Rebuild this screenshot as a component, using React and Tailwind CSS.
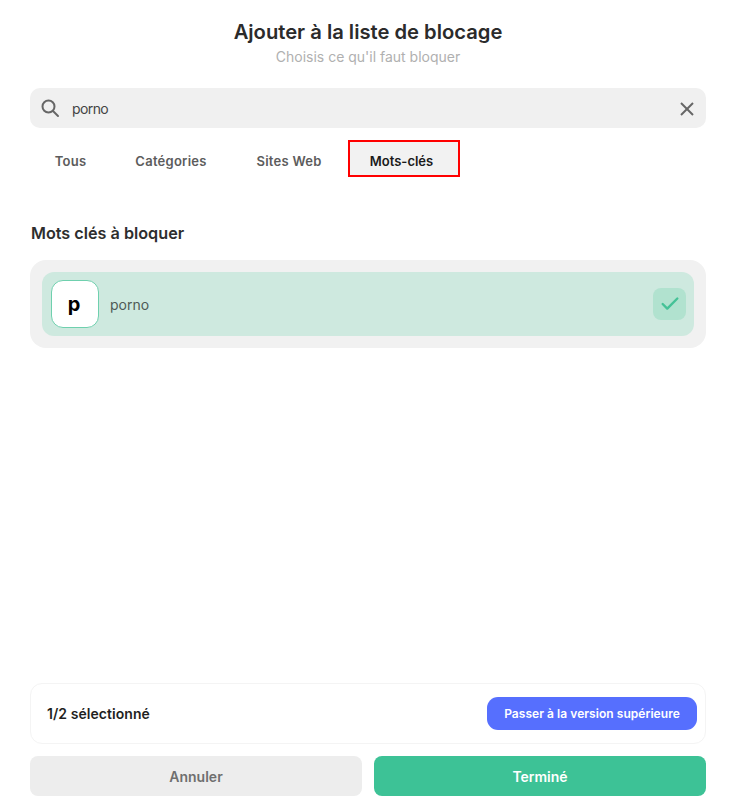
import React from 'react';
import { Check } from 'lucide-react';

const font = "font-['Inter',sans-serif]";

const tabs = [
    { label: 'Tous', className: 'w-[81px]' },
    { label: 'Catégories', className: 'w-[120px]' },
    { label: 'Sites Web', className: 'w-[116px]' },
];

const App = () => {
    return (
        <div className={`${font} h-[801px] w-[739px] bg-white flex flex-col pl-[30px] pr-[33px] overflow-hidden`}>
            <div className="pt-[20px] text-center">
                <h1 className="text-[20.2px] leading-[24px] font-semibold text-[#2b2b2b]">Ajouter à la liste de blocage</h1>
                <p className="mt-[2px] text-[14px] leading-[22px] text-[#b0b0b0]">Choisis ce qu'il faut bloquer</p>
            </div>

            <div className="mt-[20px] h-[40px] rounded-[10px] bg-[#f0f0f0] flex items-center pl-[10px] pr-[11px]">
                <svg width="20" height="20" viewBox="0 0 20 20" fill="none" stroke="#666666" strokeWidth="2" strokeLinecap="round">
                    <circle cx="8.5" cy="8.5" r="6" />
                    <line x1="13" y1="13" x2="18" y2="18" />
                </svg>
                <span className="ml-[12px] text-[14px] tracking-[-0.6px] text-[#444444]">porno</span>
                <svg width="16" height="16" viewBox="0 0 16 16" fill="none" stroke="#666666" strokeWidth="2" className="ml-auto mt-[2px]">
                    <line x1="2" y1="2" x2="14" y2="14" />
                    <line x1="14" y1="2" x2="2" y2="14" />
                </svg>
            </div>

            <div className="mt-[12px] flex items-center h-[37px] text-[13px] font-semibold tracking-[0.25px]">
                {tabs.map((tab) => (
                    <div key={tab.label} className={`${tab.className} pt-[7px] text-center text-[#5c5c5c]`}>{tab.label}</div>
                ))}
                <div className="ml-[1px] w-[112px] h-[37px] border-2 border-[#ff0000] bg-[#f2f2f2] pt-[6px] pr-[5px] flex items-center justify-center text-[#1a1a1a] tracking-normal">Mots-clés</div>
            </div>

            <h2 className="mt-[46px] ml-[1px] text-[16.2px] leading-[20px] font-semibold text-[#2e2e2e]">Mots clés à bloquer</h2>

            <div className="mt-[17px] rounded-[16px] bg-[#f1f1f1] p-[12px]">
                <div className="h-[64px] rounded-[12px] bg-[#cee9df] flex items-center pl-[9px] pr-[8px]">
                    <div className="w-[48px] h-[48px] rounded-[12px] bg-white border border-[#6fd0ae] pr-[2px] flex items-center justify-center text-[20px] font-bold text-black">p</div>
                    <span className="ml-[11px] text-[14px] text-[#4f5b56]">porno</span>
                    <div className="ml-auto w-[33px] h-[32px] rounded-[8px] bg-[#b1e2cf] flex items-center justify-center">
                        <Check size={22} strokeWidth={2.6} className="text-[#45c297]" />
                    </div>
                </div>
            </div>

            <div className="mt-auto h-[61px] rounded-[12px] border border-[#f4f4f4] flex items-center pl-[16px] pr-[8px]">
                <span className="text-[14px] font-semibold text-[#1f1f1f] tracking-[0.05px]">1/2 sélectionné</span>
                <div className="ml-auto h-[33px] w-[210px] rounded-[11px] bg-[#566ffe] flex items-center justify-center text-[12px] font-semibold text-white tracking-[0.05px]">Passer à la version supérieure</div>
            </div>

            <div className="mt-[12px] mb-[5px] flex gap-[12px] h-[40px] text-[14px] font-semibold">
                <button className="flex-1 rounded-[8px] bg-[#ededed] text-[#6f6f6f]">Annuler</button>
                <button className="flex-1 rounded-[8px] bg-[#3dc296] text-white">Terminé</button>
            </div>
        </div>
    );
};

export default App;
